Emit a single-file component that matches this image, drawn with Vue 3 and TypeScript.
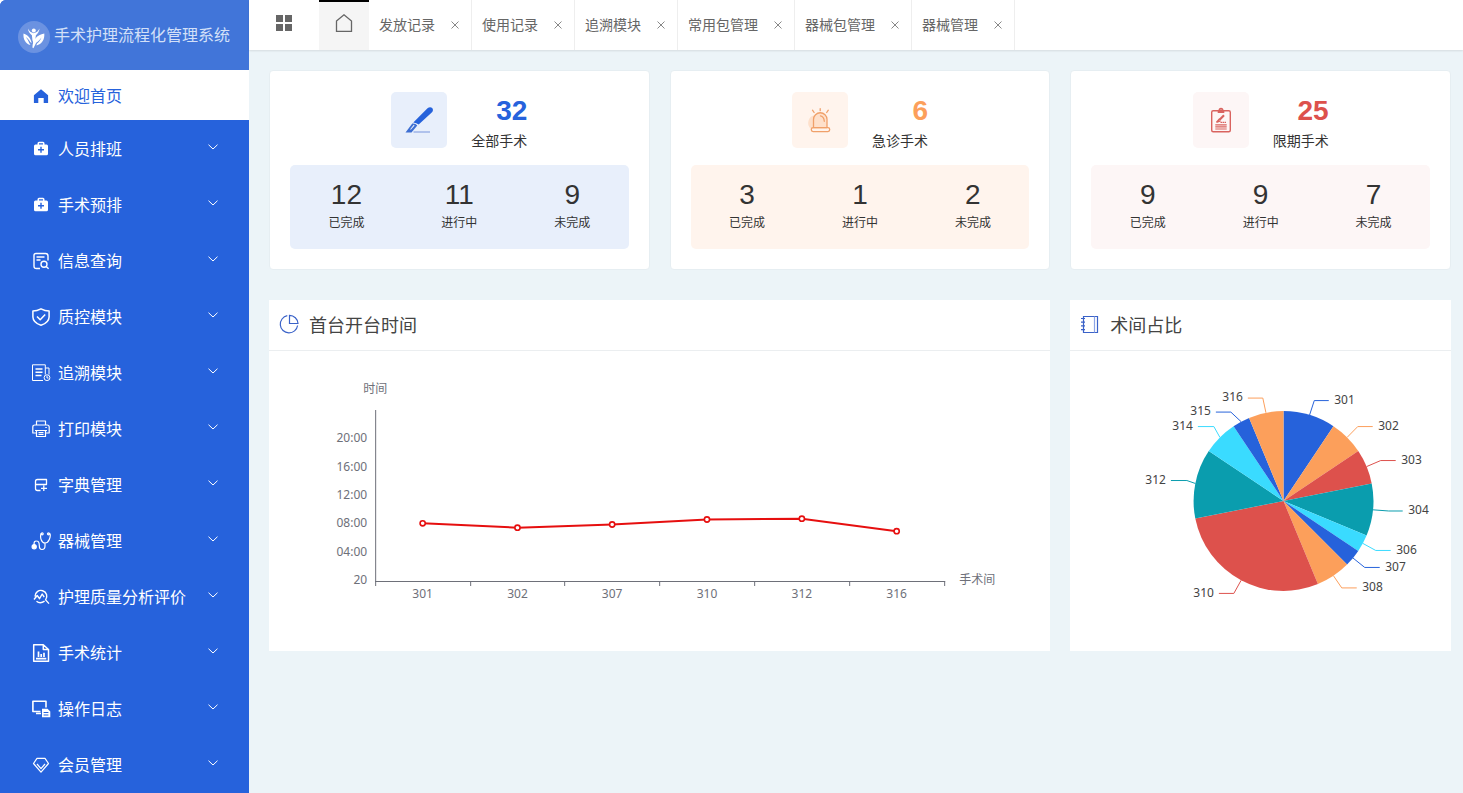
<script setup lang="ts">
import { computed, ref } from 'vue'

interface MenuItem { label: string; icon: string }
interface Tab { label: string }
interface Stat { title: string; total: number; tone: string; parts: { value: number; label: string }[] }
interface Slice { name: string; value: number; color: string; elbow: [number, number]; end: number }

const menu: MenuItem[] = [
  { label: '人员排班', icon: 'kit' },
  { label: '手术预排', icon: 'kit' },
  { label: '信息查询', icon: 'query' },
  { label: '质控模块', icon: 'shield' },
  { label: '追溯模块', icon: 'trace' },
  { label: '打印模块', icon: 'printer' },
  { label: '字典管理', icon: 'dict' },
  { label: '器械管理', icon: 'scope' },
  { label: '护理质量分析评价', icon: 'analysis' },
  { label: '手术统计', icon: 'stats' },
  { label: '操作日志', icon: 'log' },
  { label: '会员管理', icon: 'diamond' },
]

const tabs = ref<Tab[]>([
  { label: '发放记录' },
  { label: '使用记录' },
  { label: '追溯模块' },
  { label: '常用包管理' },
  { label: '器械包管理' },
  { label: '器械管理' },
])

function closeTab(index: number): void {
  tabs.value.splice(index, 1)
}

function parts(done: number, active: number, open: number) {
  return [
    { value: done, label: '已完成' },
    { value: active, label: '进行中' },
    { value: open, label: '未完成' },
  ]
}

const stats: Stat[] = [
  { title: '全部手术', total: 32, tone: 'blue', parts: parts(12, 11, 9) },
  { title: '急诊手术', total: 6, tone: 'orange', parts: parts(3, 1, 2) },
  { title: '限期手术', total: 25, tone: 'red', parts: parts(9, 9, 7) },
]

// Line chart
const yLabels = [
  { text: '20:00', y: 91 },
  { text: '16:00', y: 120 },
  { text: '12:00', y: 148 },
  { text: '08:00', y: 176 },
  { text: '04:00', y: 205 },
  { text: '20', y: 233 },
]
const ticks = [106.5, 201.5, 295.5, 390.5, 485.5, 580.5, 675.5]
const points = [
  { name: '301', x: 153.5, y: 172.3 },
  { name: '302', x: 248.3, y: 176.7 },
  { name: '307', x: 343, y: 173.5 },
  { name: '310', x: 437.8, y: 168.5 },
  { name: '312', x: 532.7, y: 167.7 },
  { name: '316', x: 627.5, y: 180.2 },
]
const linePoints = computed(() => points.map((p) => `${p.x},${p.y}`).join(' '))

// Pie chart
const cx = 213.7
const cy = 150
const radius = 90
const slices: Slice[] = [
  { name: '301', value: 3, color: '#2662db', elbow: [244.5, 49.5], end: 259 },
  { name: '302', value: 2, color: '#fc9f5b', elbow: [288, 75.5], end: 303 },
  { name: '303', value: 2, color: '#dd514c', elbow: [311, 109.5], end: 326 },
  { name: '304', value: 3, color: '#0a9dae', elbow: [319, 160], end: 333 },
  { name: '306', value: 1, color: '#3adbff', elbow: [306, 199.5], end: 321 },
  { name: '307', value: 1, color: '#2662db', elbow: [295, 216.5], end: 310 },
  { name: '308', value: 2, color: '#fc9f5b', elbow: [272, 237], end: 287 },
  { name: '310', value: 9, color: '#dd514c', elbow: [164, 242.5], end: 149 },
  { name: '312', value: 4, color: '#0a9dae', elbow: [117, 129.5], end: 101 },
  { name: '314', value: 2, color: '#3adbff', elbow: [144, 75.5], end: 128 },
  { name: '315', value: 1, color: '#2662db', elbow: [161, 61], end: 146 },
  { name: '316', value: 2, color: '#fc9f5b', elbow: [193, 47], end: 178 },
]

function polar(turn: number): [number, number] {
  const a = turn * 2 * Math.PI
  return [cx + radius * Math.sin(a), cy - radius * Math.cos(a)]
}

const pie = computed(() => {
  const sum = slices.reduce((s, item) => s + item.value, 0)
  let start = 0
  return slices.map((item) => {
    const stop = start + item.value / sum
    const [x1, y1] = polar(start)
    const [x2, y2] = polar(stop)
    const [mx, my] = polar((start + stop) / 2)
    const right = item.end > cx
    start = stop
    return {
      name: item.name,
      color: item.color,
      path: `M${cx} ${cy}L${x1} ${y1}A${radius} ${radius} 0 0 1 ${x2} ${y2}Z`,
      leader: `${mx},${my} ${item.elbow[0]},${item.elbow[1]} ${item.end},${item.elbow[1]}`,
      tx: right ? item.end + 5.5 : item.end - 5,
      ty: Math.floor(item.elbow[1] + 3.5),
      anchor: right ? ('start' as const) : ('end' as const),
    }
  })
})
</script>

<template>
  <div class="app">
    <aside class="sidebar">
      <header class="brand">
        <svg class="brand-logo" viewBox="0 0 32 32" aria-hidden="true">
          <circle cx="16" cy="16" r="16" fill="#6b92e1" />
          <g fill="#fff">
            <circle cx="15.8" cy="9.500" r="2" />
            <path d="M10 7.600c1.200 2.600 3 4.200 5.800 4.600 2.800-.4 4.400-2 5.700-4.600-.3 3.300-1.900 5.400-3.600 6.700l-.8 5.700-1.400 3-1.300-4-.5-4.700C12 12.900 10.200 10.800 10 7.600z" />
            <path d="M5.500 12.500c4.700 1.600 7.500 5 8.100 9.800l-1.300-1.200c-1.200-2.100-2.600-3.700-4.500-5 1.400 1.900 2.600 3.600 3.300 5.600l1.400 2.400C7.300 22.800 5 18 5.500 12.500z" />
            <path d="M26.300 12.500c.5 6.200-2.400 10.700-7.900 12l.5-1.800c2-1.600 3.600-3.600 4.600-6.200-1.600 2.200-3.300 4-5.300 5.200l-2.800 5.500-1-.6c.3-7.700 4.200-12.800 11.900-14.100z" />
          </g>
        </svg>
        <span class="brand-name">手术护理流程化管理系统</span>
      </header>
      <nav class="menu">
        <a class="menu-item active" href="#home">
          <svg class="menu-icon" viewBox="0 0 20 20" aria-hidden="true">
            <path fill="currentColor" d="M10 3.300 2.900 9.300V17H7.300V12H12.700V17H17.100V9.300z" />
          </svg>
          <span class="menu-label">欢迎首页</span>
        </a>
        <button v-for="item in menu" :key="item.label" class="menu-item" type="button">
          <svg class="menu-icon" viewBox="0 0 20 20" fill="none" stroke="currentColor" stroke-width="1.400" stroke-linejoin="round" aria-hidden="true">
            <g v-if="item.icon === 'kit'">
              <path fill="currentColor" stroke="none" fill-rule="evenodd" d="M4.500 5.500h2V4.300q0-1.500 1.500-1.500h4q1.500 0 1.500 1.500v1.200h2Q17 5.500 17 7v7.800q0 1.500-1.500 1.500h-11Q3 16.300 3 14.800V7q0-1.500 1.500-1.500zM8 5.500h4V4.300H8zM9.300 7.700V10H7v1.400h2.300v2.300h1.400v-2.300H13V10h-2.300V7.700z" />
            </g>
            <g v-else-if="item.icon === 'query'">
              <path d="M9 17.500H5.500Q3 17.500 3 15V4.500Q3 2.500 5 2.500H14.500Q17 2.500 17 5V9.500M5.500 6h8M5.500 9h4" />
              <circle cx="13" cy="13.300" r="3" />
              <path d="m15.200 15.500 2.400 2.300" />
            </g>
            <g v-else-if="item.icon === 'shield'" stroke-width="1.500">
              <path d="M10 1.800Q6 4 1.900 4.100V10Q2 15.500 10 18.300 18 15.500 18.100 10V4.100Q14 4 10 1.800z" />
              <path d="m6 9.500 3.200 3.300 5-5.300" />
            </g>
            <g v-else-if="item.icon === 'trace'" stroke-width="1">
              <path d="M12 17.500H1.500V1.800H14.300V11.500M14.300 5H18V11.500" />
              <path stroke-width="1.600" d="M4.500 6h7M4.500 9.300h7M4.500 12.500h6" />
              <circle cx="16" cy="14.700" r="2.900" />
              <path d="M16 13v2h1.500" />
            </g>
            <g v-else-if="item.icon === 'printer'" stroke-width="1.200">
              <path d="M5.500 5.500V2H14.500V5.500M5 14H1.800V8Q1.800 6 4 6H16Q18.200 6 18.200 8V14H15" />
              <path d="M4 11.500H16M5.500 11.500H14.500V17.500H5.500zM7.500 13.700h5M7.500 15.500h5M14.300 8.500h1.500" />
            </g>
            <g v-else-if="item.icon === 'dict'" stroke-width="1.300">
              <path d="M9.500 15.500H6.500Q4.500 15.500 4.500 13.500V6.500Q4.500 4.500 6.500 4.500H15.500V9.500H4.500M12.800 10.500v5.500M10 13.300h6" />
            </g>
            <g v-else-if="item.icon === 'scope'" stroke-width="1.200">
              <circle cx="3.200" cy="15.700" r="2.100" fill="currentColor" />
              <path d="M3.200 14Q2.500 9.800 5.600 10 8.300 10 8.300 14.500 8.300 18.500 11 18.500 14 18.500 14 15V12M11 2.800H10Q9 6 10.300 9 11.500 12 14 12 16.800 12 18.300 8.500 19.800 5 19 2.800H17.500" />
              <circle cx="11.200" cy="2.800" r="1" />
              <circle cx="17.500" cy="2.800" r="1" />
            </g>
            <g v-else-if="item.icon === 'analysis'">
              <path d="M4 9.500A5.900 5.900 0 1 1 14.600 12.900L18 16.600M3 12.500 6.200 8.500l2.300 3.200 2.700-4.700 2 3.200M5.500 14.200Q9 17.200 13.600 14.200" />
            </g>
            <g v-else-if="item.icon === 'stats'">
              <path stroke-width="1.500" d="M3.900 1.800H12.300L17.500 6.500V18.200H2.700V1.800zM12.300 1.800V6.500H17.500" />
              <path stroke-width="1.700" d="M7.500 14V8.500M10.200 14V11M13 14V9.800M5 15.700H15.300" />
            </g>
            <g v-else-if="item.icon === 'log'">
              <path stroke-width="1.600" d="M15 8.500V2.200H1.900V12.500H9.500M5 14.500h5" />
              <path fill="currentColor" stroke="none" fill-rule="evenodd" d="M11 9.800h5.500L19.300 12.500V18.300H11zM12.600 13v.9h4.800V13zM12.600 15.500v.9h4.800v-.9z" />
            </g>
            <g v-else stroke-width="1.200">
              <path d="M6 3.300H14L17.500 8.500 10 17.200 2.500 8.500zM6 9l4 4.700L14 9" />
            </g>
          </svg>
          <span class="menu-label">{{ item.label }}</span>
          <svg class="chevron" viewBox="0 0 10 6" aria-hidden="true">
            <path d="M.5.7 5 5 9.500.7" fill="none" stroke="currentColor" />
          </svg>
        </button>
      </nav>
    </aside>

    <div class="workspace">
      <header class="topbar">
        <button class="grid-button" type="button" aria-label="菜单">
          <svg class="top-icon" viewBox="0 0 18 18" aria-hidden="true">
            <path fill="#666" d="M1 1h7v7H1zM10 1h7v7h-7zM1 10h7v7H1zM10 10h7v7h-7z" />
          </svg>
        </button>
        <a class="home-tab" href="#home" aria-label="首页">
          <svg class="top-icon" viewBox="0 0 18 18" aria-hidden="true">
            <path fill="none" stroke="#666" stroke-width="1.300" d="M1.500 7 9 .8 16.500 7V17.300H1.500z" />
          </svg>
        </a>
        <nav class="tabs">
          <div v-for="(tab, i) in tabs" :key="tab.label" class="tab">
            <a href="#tab">{{ tab.label }}</a>
            <button type="button" :aria-label="'关闭' + tab.label" @click="closeTab(i)">
              <svg viewBox="0 0 8 8" aria-hidden="true"><path d="M.5.5l7 7M7.500.5l-7 7" fill="none" stroke="#888" /></svg>
            </button>
          </div>
        </nav>
      </header>

      <main class="board">
        <section v-for="s in stats" :key="s.title" class="card" :class="s.tone">
          <div class="card-head">
            <div class="tile">
              <svg v-if="s.tone === 'blue'" viewBox="0 0 28 28" aria-hidden="true">
                <path fill="#2662db" d="M8.300 16.400 22.500 2.300Q25 .4 27.200 2 28.800 3.900 27 6.300L13.700 18.500Q11.500 16.800 8.300 16.400z" />
                <path fill="#3e6fd2" fill-rule="evenodd" d="M7.300 17.600Q10.800 17.300 12.300 19.600L6.500 26.500H.500zM8.700 18.800 5.200 23.200 5.800 23.700 9.600 19.400z" />
                <path stroke="#91abe3" stroke-width="1.300" d="M8.500 26H25" />
              </svg>
              <svg v-else-if="s.tone === 'orange'" viewBox="0 0 28 28" fill="none" stroke="#f0a06a" stroke-width="1.300" stroke-linecap="round" aria-hidden="true">
                <path fill="#fee0cb" stroke="none" d="M9 9A8 8 0 0 0 5 23H21V16L19 9Q14 4 9 9z" />
                <path d="M7.500 21.400V13.500A6.500 6.500 0 0 1 21 13.500V21.400M14.500 9.800Q18 10.500 18.300 15.300M6.500 4.200l1.600 2.300M14.200 2.700v2M22.300 4.200l-1.600 2.300" />
                <rect x="5.300" y="21.600" width="18.400" height="4" rx="1.800" />
              </svg>
              <svg v-else viewBox="0 0 28 28" fill="none" stroke="#d9635f" stroke-width="1.400" aria-hidden="true">
                <rect x="4.700" y="4.700" width="18.600" height="21" rx="1.500" />
                <path fill="#d9635f" stroke="none" fill-rule="evenodd" d="M10.700 7V4.200H11.500A2.500 2.500 0 0 1 16.500 4.200H17.300V7zM13 4.200A1.100 1.100 0 0 0 15 4.200 1.100 1.100 0 0 0 13 4.200z" />
                <path stroke-width="2.200" d="M17 9.300 12.300 14" />
                <path d="m12.700 12.700-3.200 3.600 4-1.500" />
                <path stroke-dasharray="1.500 .5" d="M13.500 16.400h5.500" />
                <path d="M8.300 18.800h11.400M8.300 20.900h11.400M8.300 23h11.400" stroke-width="1.200" />
              </svg>
            </div>
            <div class="total">
              <strong>{{ s.total }}</strong>
              <span>{{ s.title }}</span>
            </div>
          </div>
          <dl class="parts">
            <div v-for="p in s.parts" :key="p.label" class="part">
              <dd>{{ p.value }}</dd>
              <dt>{{ p.label }}</dt>
            </div>
          </dl>
        </section>

        <section class="panel wide">
          <h2>
            <svg viewBox="0 0 20 20" fill="none" stroke="#3a62c8" stroke-width="1.200" aria-hidden="true">
              <path d="M8.300 1.700A8.700 8.700 0 1 0 18.600 11.500M10.500 1.400A8.600 8.600 0 0 1 19 9.500H10.500z" />
            </svg>
            <span>首台开台时间</span>
          </h2>
          <svg class="chart" viewBox="0 0 781 300" role="img" aria-label="首台开台时间">
            <g class="axis-text">
              <text x="106" y="42" text-anchor="middle">时间</text>
              <text x="690" y="233">手术间</text>
              <text v-for="l in yLabels" :key="l.y" x="98" :y="l.y" text-anchor="end">{{ l.text }}</text>
              <text v-for="p in points" :key="p.name" :x="p.x" y="247" text-anchor="middle">{{ p.name }}</text>
            </g>
            <g class="axis">
              <path d="M106.500 59V231M106 230.500H676" />
              <path v-for="t in ticks" :key="t" :d="`M${t} 230V235`" />
            </g>
            <polyline :points="linePoints" fill="none" stroke="#e60f0f" stroke-width="2" />
            <circle v-for="p in points" :key="p.name" :cx="p.x" :cy="p.y" r="2.600" fill="#fff" stroke="#e60f0f" stroke-width="1.600" />
          </svg>
        </section>

        <section class="panel">
          <h2>
            <svg viewBox="0 0 20 20" fill="none" stroke="#3a62c8" stroke-width="1.200" aria-hidden="true">
              <path d="M3.500 2.500H17.500V18.500H3.500z" />
              <path d="M14.500 2.500V18.500" stroke="#8da5e6" />
              <path d="M1 4.500h4M1 8.200h4M1 11.900h4M1 15.600h4" />
            </svg>
            <span>术间占比</span>
          </h2>
          <svg class="chart" viewBox="0 0 381 300" role="img" aria-label="术间占比">
            <path v-for="s in pie" :key="s.name" :d="s.path" :fill="s.color" />
            <polyline v-for="s in pie" :key="s.name" :points="s.leader" fill="none" :stroke="s.color" />
            <g class="pie-text">
              <text v-for="s in pie" :key="s.name" :x="s.tx" :y="s.ty" :text-anchor="s.anchor">{{ s.name }}</text>
            </g>
          </svg>
        </section>
      </main>
    </div>
  </div>
</template>

<style>
html,
body {
  margin: 0;
  background: #fff;
}
</style>

<style scoped>
* {
  box-sizing: border-box;
}

.app {
  display: flex;
  height: 100vh;
  overflow: hidden;
  font-family: "Liberation Sans", "Noto Sans CJK SC", sans-serif;
  color: #333;
}

a {
  color: inherit;
  text-decoration: none;
}

button {
  padding: 0;
  border: 0;
  background: none;
  font: inherit;
  color: inherit;
  cursor: pointer;
}

svg {
  display: block;
  flex: none;
}

.sidebar {
  flex: none;
  width: 249px;
  overflow: hidden;
  border-top-left-radius: 6px;
  background: #2662dc;
  color: #fff;
}

.brand {
  display: flex;
  align-items: center;
  gap: 4px;
  height: 70px;
  padding-left: 18px;
  background: #4175d9;
}

.brand-logo {
  width: 32px;
  height: 32px;
  margin-top: 4px;
}

.brand-name {
  padding-bottom: 2px;
  font-size: 16px;
  color: #d3e0f8;
  white-space: nowrap;
}

.menu {
  display: flex;
  flex-direction: column;
}

.menu-item {
  display: flex;
  flex: none;
  align-items: center;
  height: 56px;
  padding: 0 31px;
  font-size: 16px;
  text-align: left;
}

.menu-item.active {
  height: 50px;
  background: #fff;
  color: #2662dc;
}

.menu-icon {
  width: 20px;
  height: 20px;
  margin-top: 2px;
}

.menu-label {
  flex: 1;
  padding-top: 4px;
  margin-left: 7px;
  line-height: 24px;
}

.chevron {
  width: 10px;
  height: 6px;
  margin-bottom: 2px;
}

.workspace {
  display: flex;
  flex: 1;
  flex-direction: column;
  min-width: 0;
  background: #ecf4f8;
}

.topbar {
  display: flex;
  flex: none;
  height: 50px;
  background: #fff;
  box-shadow: 0 1px 2px rgba(0, 0, 0, 0.1);
}

.grid-button,
.home-tab {
  display: flex;
  align-items: center;
  justify-content: center;
  padding-bottom: 4px;
}

.grid-button {
  width: 70px;
}

.home-tab {
  width: 50px;
  border-top: 2px solid #000;
  padding-bottom: 6px;
  background: #f5f5f5;
}

.top-icon {
  width: 18px;
  height: 18px;
}

.tabs {
  display: flex;
}

.tab {
  display: flex;
  align-items: center;
  gap: 12px;
  padding: 0 8px 0 10px;
  border-right: 1px solid #eee;
  font-size: 14px;
  color: #666;
  white-space: nowrap;
}

.tab a {
  padding-bottom: 2px;
}

.tab button {
  display: flex;
  align-items: center;
  justify-content: center;
  width: 16px;
  height: 16px;
}

.tab button svg {
  width: 8px;
  height: 8px;
}

.board {
  display: grid;
  grid-template-columns: repeat(3, minmax(0, 1fr));
  gap: 30px 20px;
  padding: 20px 12px 20px 20px;
}

.card {
  padding: 21px 20px 20px;
  border: 1px solid #e6eef2;
  border-radius: 4px;
  background: #fff;
}

.card-head {
  display: flex;
  align-items: flex-start;
  justify-content: center;
  gap: 24px;
  margin-bottom: 13px;
}

.tile {
  display: flex;
  align-items: center;
  justify-content: center;
  width: 56px;
  height: 56px;
  border-radius: 5px;
}

.tile svg {
  width: 28px;
  height: 28px;
}

.total {
  display: flex;
  flex-direction: column;
  align-items: flex-end;
}

.total strong {
  font-size: 28px;
  line-height: 38px;
}

.total span {
  font-size: 14px;
  line-height: 22px;
}

.parts {
  display: grid;
  grid-template-columns: repeat(3, 1fr);
  margin: 0;
  padding: 13px 0 15px;
  border-radius: 5px;
  text-align: center;
}

.part dd {
  margin: 0;
  font-size: 28px;
  line-height: 34px;
}

.part dt {
  font-size: 12px;
  line-height: 22px;
}

.blue .tile,
.blue .parts {
  background: #e8effb;
}

.blue strong {
  color: #2662dc;
}

.orange .tile,
.orange .parts {
  background: #fff4ed;
}

.orange strong {
  color: #fc9f5b;
}

.red .tile,
.red .parts {
  background: #fdf6f6;
}

.red strong {
  color: #dd514c;
}

.panel {
  background: #fff;
}

.panel.wide {
  grid-column: span 2;
}

.panel h2 {
  display: flex;
  align-items: center;
  gap: 10px;
  height: 51px;
  margin: 0;
  padding: 0 10px 2px;
  border-bottom: 1px solid #ebeef0;
  font-size: 18px;
  font-weight: 400;
  color: #444;
}

.panel h2 svg {
  width: 20px;
  height: 20px;
}

.chart {
  width: 100%;
  height: 300px;
}

.axis {
  fill: none;
  stroke: #6e7079;
}

.axis-text,
.pie-text {
  font-family: "Noto Sans", "Noto Sans CJK SC", sans-serif;
  font-size: 12px;
}

.axis-text {
  fill: #6e7079;
}

.pie-text {
  fill: #444;
}
</style>
